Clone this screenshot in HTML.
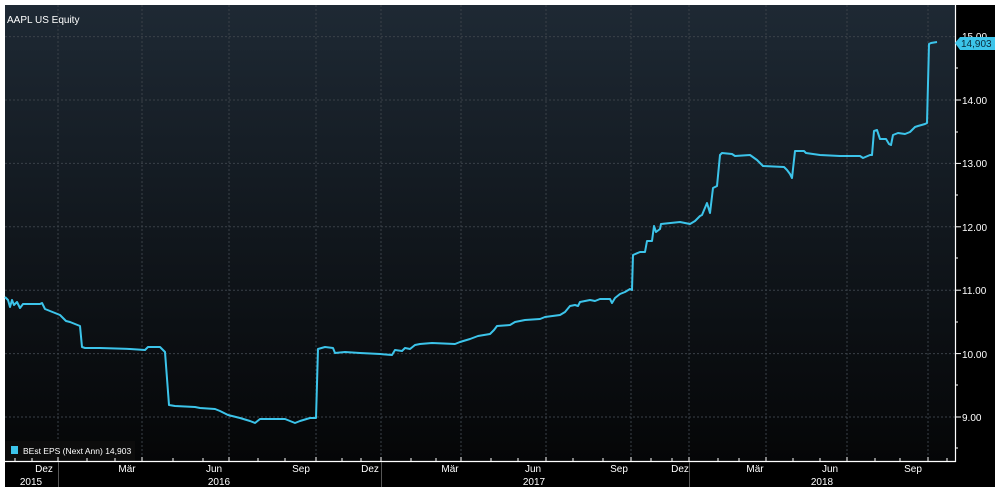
<!DOCTYPE html>
<html><head><meta charset="utf-8"><style>
html,body{margin:0;padding:0;background:#fff;width:1000px;height:495px;overflow:hidden}
svg{display:block;font-family:"Liberation Sans",sans-serif}
</style></head><body>
<svg width="1000" height="495" viewBox="0 0 1000 495" xmlns="http://www.w3.org/2000/svg">
<defs>
<linearGradient id="bg" x1="0" y1="0" x2="0" y2="1">
<stop offset="0" stop-color="#1e2934"/>
<stop offset="0.5" stop-color="#11171d"/>
<stop offset="1" stop-color="#050607"/>
</linearGradient>
</defs>
<rect x="5" y="5" width="990" height="482" fill="#000"/>
<rect x="5" y="5" width="950" height="456" fill="url(#bg)"/>
<g stroke="#3a4148" stroke-width="1" stroke-dasharray="2,2">
<line x1="5" y1="36.6" x2="955" y2="36.6"/>
<line x1="5" y1="100" x2="955" y2="100"/>
<line x1="5" y1="163.4" x2="955" y2="163.4"/>
<line x1="5" y1="226.8" x2="955" y2="226.8"/>
<line x1="5" y1="290.2" x2="955" y2="290.2"/>
<line x1="5" y1="353.6" x2="955" y2="353.6"/>
<line x1="5" y1="417" x2="955" y2="417"/>
<line x1="58" y1="5" x2="58" y2="461"/><line x1="142" y1="5" x2="142" y2="461"/>
<line x1="229" y1="5" x2="229" y2="461"/><line x1="316" y1="5" x2="316" y2="461"/>
<line x1="381" y1="5" x2="381" y2="461"/><line x1="461" y1="5" x2="461" y2="461"/>
<line x1="546" y1="5" x2="546" y2="461"/><line x1="631" y1="5" x2="631" y2="461"/>
<line x1="689" y1="5" x2="689" y2="461"/><line x1="766" y1="5" x2="766" y2="461"/>
<line x1="847" y1="5" x2="847" y2="461"/><line x1="928" y1="5" x2="928" y2="461"/>
</g>
<text x="7" y="23" fill="#fff" font-size="10">AAPL US Equity</text>
<polyline fill="none" stroke="#3cc4ea" stroke-width="2" stroke-linejoin="round" points="5,297 8,300 10,307 12,300 14,305 17,302 20,308 23,304 40,304 42,303 45,309 55,313 60,315 63,318 66,321 70,322 80,326 82,347 85,348 100,348 130,349 145,350 148,347 160,347 163,350 165,352 169,405 175,406 195,407 200,408 215,409 220,411 228,415 240,418 250,421 255,423 260,419 285,419 295,423 300,421 310,418 316,418 318,349 325,347 333,348 335,353 345,352 360,353 380,354 392,355 395,350 402,351 405,348 410,349 415,345 420,344 432,343 455,344 460,342 470,339 478,336 490,334 494,330 497,326 510,325 515,322 525,320 540,319 545,317 560,315 565,312 570,306 575,305 578,306 580,302 590,300 595,301 600,299 610,299 612,303 615,298 620,294 625,292 630,289 632,290 633,255 640,252 645,252 647,241 652,241 654,226 656,232 660,229 661,224 680,222 690,224 695,221 700,216 702,215 707,203 710,213 713,188 717,186 720,155 722,153 732,154 735,156 750,155 757,160 763,166 784,167 787,170 790,174 792,178 795,151 804,151 806,153 820,155 840,156 860,156 863,158 870,155 872,155 874,131 877,130 880,139 886,139 889,144 891,145 893,135 898,133 905,134 910,132 912,130 915,127 918,126 925,124 927,123 929,44 931,43 937,42"/>
<rect x="5" y="441" width="130" height="20" fill="#0c0c0c"/>
<rect x="11" y="446" width="7" height="8" fill="#3cc4ea"/>
<text x="23" y="454" fill="#fff" font-size="8.5">BEst EPS (Next Ann) 14,903</text>
<line x1="5" y1="461.5" x2="956" y2="461.5" stroke="#fff" stroke-width="1.2"/>
<line x1="955.5" y1="5" x2="955.5" y2="462" stroke="#fff" stroke-width="1.2"/>
<g stroke="#fff" stroke-width="1">
<line x1="955" y1="100" x2="961" y2="100"/><line x1="955" y1="163.4" x2="961" y2="163.4"/>
<line x1="955" y1="226.8" x2="961" y2="226.8"/><line x1="955" y1="290.2" x2="961" y2="290.2"/>
<line x1="955" y1="353.6" x2="961" y2="353.6"/><line x1="955" y1="417" x2="961" y2="417"/>
<line x1="955" y1="68" x2="958" y2="68"/><line x1="955" y1="132" x2="958" y2="132"/>
<line x1="955" y1="195" x2="958" y2="195"/><line x1="955" y1="258" x2="958" y2="258"/>
<line x1="955" y1="322" x2="958" y2="322"/><line x1="955" y1="385" x2="958" y2="385"/>
<line x1="955" y1="448" x2="958" y2="448"/>
</g>
<g fill="#fff" font-size="10">
<text x="962" y="40">15.00</text>
<text x="962" y="104">14.00</text><text x="962" y="167">13.00</text>
<text x="962" y="231">12.00</text><text x="962" y="294">11.00</text>
<text x="962" y="358">10.00</text><text x="962" y="421">9.00</text>
</g>
<path d="M955,43 L960,37 H995 V50 H960 Z" fill="#3cc4ea"/>
<text x="961" y="47" fill="#0a2a3a" font-size="10">14,903</text>
<g stroke="#fff" stroke-width="1">
<line x1="15" y1="458" x2="15" y2="461"/><line x1="32" y1="458" x2="32" y2="461"/><line x1="58" y1="457" x2="58" y2="461"/>
<line x1="87" y1="458" x2="87" y2="461"/><line x1="115" y1="458" x2="115" y2="461"/><line x1="142" y1="457" x2="142" y2="461"/>
<line x1="173" y1="458" x2="173" y2="461"/><line x1="203" y1="458" x2="203" y2="461"/><line x1="229" y1="457" x2="229" y2="461"/>
<line x1="258" y1="458" x2="258" y2="461"/><line x1="285" y1="458" x2="285" y2="461"/><line x1="316" y1="457" x2="316" y2="461"/>
<line x1="342" y1="458" x2="342" y2="461"/><line x1="361" y1="458" x2="361" y2="461"/><line x1="381" y1="457" x2="381" y2="461"/>
<line x1="411" y1="458" x2="411" y2="461"/><line x1="436" y1="458" x2="436" y2="461"/><line x1="461" y1="457" x2="461" y2="461"/>
<line x1="491" y1="458" x2="491" y2="461"/><line x1="518" y1="458" x2="518" y2="461"/><line x1="546" y1="457" x2="546" y2="461"/>
<line x1="573" y1="458" x2="573" y2="461"/><line x1="603" y1="458" x2="603" y2="461"/><line x1="631" y1="457" x2="631" y2="461"/>
<line x1="651" y1="458" x2="651" y2="461"/><line x1="672" y1="458" x2="672" y2="461"/><line x1="689" y1="457" x2="689" y2="461"/>
<line x1="718" y1="458" x2="718" y2="461"/><line x1="739" y1="458" x2="739" y2="461"/><line x1="766" y1="457" x2="766" y2="461"/>
<line x1="793" y1="458" x2="793" y2="461"/><line x1="820" y1="458" x2="820" y2="461"/><line x1="847" y1="457" x2="847" y2="461"/>
<line x1="875" y1="458" x2="875" y2="461"/><line x1="900" y1="458" x2="900" y2="461"/><line x1="928" y1="457" x2="928" y2="461"/>
<line x1="947" y1="458" x2="947" y2="461"/>
</g>
<g stroke="#555" stroke-width="1">
<line x1="58.5" y1="462" x2="58.5" y2="487"/>
<line x1="381.5" y1="462" x2="381.5" y2="487"/>
<line x1="689.5" y1="462" x2="689.5" y2="487"/>
</g>
<g fill="#fff" font-size="10" text-anchor="middle">
<text x="44" y="472">Dez</text><text x="127" y="472">Mär</text><text x="214" y="472">Jun</text>
<text x="301" y="472">Sep</text><text x="370" y="472">Dez</text><text x="450" y="472">Mär</text>
<text x="533" y="472">Jun</text><text x="619" y="472">Sep</text><text x="680" y="472">Dez</text>
<text x="755" y="472">Mär</text><text x="830" y="472">Jun</text><text x="913" y="472">Sep</text>
<text x="31" y="485">2015</text><text x="219" y="485">2016</text>
<text x="534" y="485">2017</text><text x="822" y="485">2018</text>
</g>
</svg>
</body></html>
